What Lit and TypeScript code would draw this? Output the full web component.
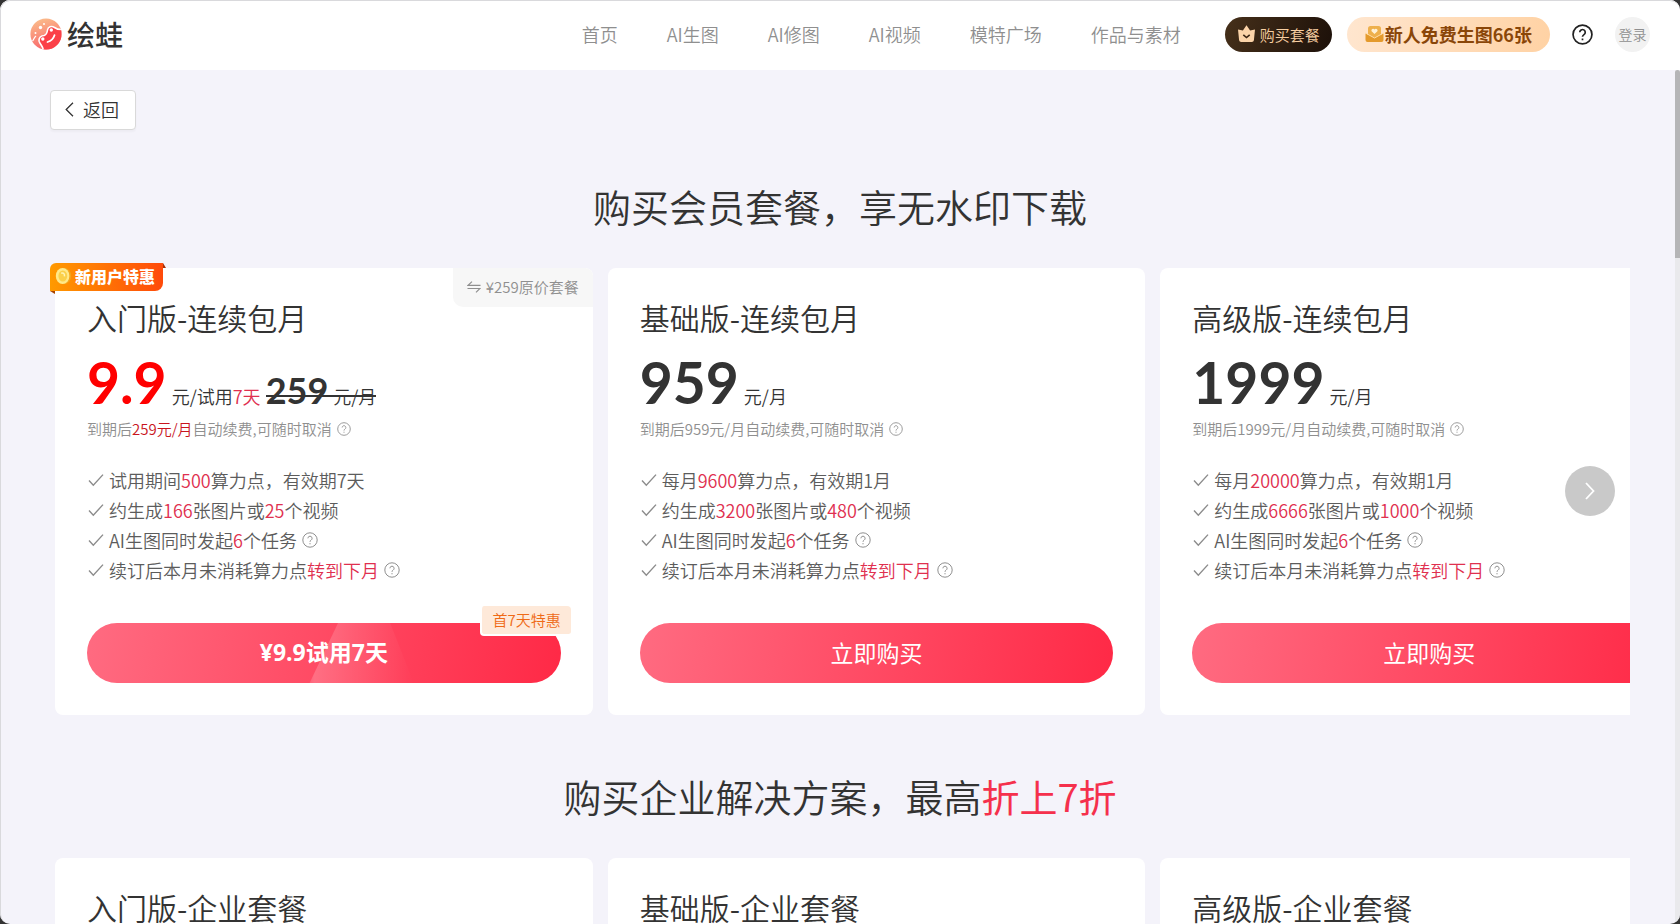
import { LitElement, html, css, nothing, TemplateResult } from "lit";
import { customElement, property } from "lit/decorators.js";

type Part = string | { hot: string };
interface Feature { parts: Part[]; help?: boolean }
interface Plan {
  name: string;
  price: string;
  trial?: boolean;
  renew: Part[];
  features: Feature[];
}

const hot = (text: string): Part => ({ hot: text });
const rich = (parts: Part[]) =>
  parts.map((p) => (typeof p === "string" ? p : html`<span class="hot">${p.hot}</span>`));

const common: Feature[] = [
  { parts: ["AI生图同时发起", hot("6"), "个任务"], help: true },
  { parts: ["续订后本月未消耗算力点", hot("转到下月")], help: true },
];

const memberPlans: Plan[] = [
  {
    name: "入门版-连续包月", price: "9.9", trial: true,
    renew: ["到期后", hot("259元/月"), "自动续费,可随时取消"],
    features: [
      { parts: ["试用期间", hot("500"), "算力点，有效期7天"] },
      { parts: ["约生成", hot("166"), "张图片或", hot("25"), "个视频"] },
      ...common,
    ],
  },
  {
    name: "基础版-连续包月", price: "959",
    renew: ["到期后959元/月自动续费,可随时取消"],
    features: [
      { parts: ["每月", hot("9600"), "算力点，有效期1月"] },
      { parts: ["约生成", hot("3200"), "张图片或", hot("480"), "个视频"] },
      ...common,
    ],
  },
  {
    name: "高级版-连续包月", price: "1999",
    renew: ["到期后1999元/月自动续费,可随时取消"],
    features: [
      { parts: ["每月", hot("20000"), "算力点，有效期1月"] },
      { parts: ["约生成", hot("6666"), "张图片或", hot("1000"), "个视频"] },
      ...common,
    ],
  },
];

const companyPlans = ["入门版-企业套餐", "基础版-企业套餐", "高级版-企业套餐"];

const helpIcon = (size: number, weight = 1) => html`
  <svg class="icon" width=${size} height=${size} viewBox="0 0 16 16" fill="none" stroke="currentColor" stroke-width=${weight}>
    <circle cx="8" cy="8" r="7.2"></circle>
    <path d="M5.9 6.3a2.1 2.1 0 1 1 3.2 1.8c-.7.5-1.1.8-1.1 1.7"></path>
    <path d="M8 11.1v1.2"></path>
  </svg>`;

const checkIcon = html`
  <svg class="icon check" width="16" height="14" viewBox="0 0 16 14" fill="none" stroke="#8c8c8c" stroke-width="1.4">
    <path d="M1 7.6l4.3 4.6L15 1.6"></path>
  </svg>`;

@customElement("plan-card")
class PlanCard extends LitElement {
  @property({ attribute: false }) plan!: Plan;

  static styles = css`
    :host { display: block; position: relative; box-sizing: border-box; padding: 32px; background: #fff; border-radius: 8px; color: #333; }
    .name { margin: 0; font-size: 30px; line-height: 34px; font-weight: 350; }
    .price { display: flex; align-items: baseline; gap: 5px; margin-top: 18px; font-size: 18px; line-height: 24px; white-space: nowrap; }
    .amount { font: 700 57px/60px Lato, sans-serif; }
    .amount.trial { color: #f00; }
    .old { position: relative; display: flex; align-items: baseline; gap: 5px; }
    .old::after { content: ""; position: absolute; left: 0; right: 0; bottom: 11px; height: 2px; background: #333; }
    .was { font: 700 36px/36px Lato, sans-serif; }
    .hot { color: #e0304f; }
    .renew { display: flex; align-items: center; margin: 7px 0 0; font-size: 15px; line-height: 20px; color: #8f8f8f; white-space: nowrap; }
    .renew .hot { color: #c9151e; }
    .renew .icon { margin-left: 5px; }
    .features { margin: 26px 0 38px; padding: 0; list-style: none; font-size: 18px; line-height: 30px; color: #5c5c5c; }
    .feature { display: flex; align-items: center; height: 30px; white-space: nowrap; }
    .feature .icon { color: #8f8f8f; margin-left: 5px; }
    .feature .check { margin: 0 5px 0 1px; }
    .icon { flex: none; }
    .action { position: relative; }
    .buy { display: block; width: 100%; height: 60px; padding: 0 0 2px; border: 0; border-radius: 30px; overflow: hidden; position: relative;
      background: linear-gradient(100deg, #ff6b81, #ff2946); color: #fff; font: 400 23px/58px "Noto Sans CJK SC", sans-serif; cursor: pointer; }
    .buy.trial { font-family: "Open Sans", "Noto Sans CJK SC", sans-serif; font-weight: 700; }
    .shine { position: absolute; inset: 0; clip-path: polygon(53% 0, 64% 0, 69% 100%, 47% 100%);
      background: linear-gradient(90deg, transparent 45%, #ffffff33 48%, #ffffff1a 58%, transparent 69%); }
    .label { position: relative; }
    .promo { position: absolute; right: -10px; top: -17px; padding: 0 10px; border: 2px solid #fff; border-width: 0 0 2px 2px; border-radius: 4px; background: #fee9d9; color: #ef6a16; font-size: 15px; line-height: 28px; }
    .ribbon { position: absolute; left: -5px; top: -5px; display: flex; align-items: center; gap: 3px; box-sizing: border-box; height: 28px; padding: 0 8px 2px 5px;
      border-radius: 6px 0 8px 0; background: linear-gradient(90deg, #ff9a00, #ff4a0a); color: #fff; font-weight: 900; font-size: 16px; line-height: 26px; white-space: nowrap; }
    .ribbon::before { content: ""; position: absolute; left: 0; top: 28px; border-top: 3px solid #a84300; border-left: 5px solid transparent; }
    .ribbon::after { content: ""; position: absolute; right: -3px; top: 0; border-bottom: 5px solid #a83208; border-right: 3px solid transparent; }
    .swap { position: absolute; right: 0; top: 0; display: flex; align-items: center; gap: 5px; height: 39px; padding: 0 14px 2px; border: 0; border-radius: 0 8px 0 10px;
      background: #f7f7f7; color: #8f8f8f; font: inherit; font-size: 15px; cursor: pointer; }
  `;

  render() {
    const p = this.plan;
    return html`
      ${p.trial ? html`
        <div class="ribbon">
          <svg width="17" height="18" viewBox="0 0 17 18">
            <ellipse cx="9.3" cy="9" rx="6.8" ry="8" fill="#f3a51c"></ellipse>
            <ellipse cx="7.6" cy="9" rx="6.8" ry="8" fill="#ffe98a"></ellipse>
            <ellipse cx="7.8" cy="9" rx="4.4" ry="5.6" fill="#fbd04a"></ellipse>
            <path d="M6.2 6.2c2.600-1 3.600 1 3.200 3.200" stroke="#fff3b8" stroke-width="1.500" fill="none"></path>
          </svg>新用户特惠
        </div>
        <button class="swap" type="button">
          <svg width="14" height="12" viewBox="0 0 14 12" fill="none" stroke="currentColor" stroke-width="1.200">
            <path d="M5 .6L1 4.300h12.500M.5 7.500H13L9 11.400"></path>
          </svg>¥259原价套餐
        </button>` : nothing}
      <h3 class="name">${p.name}</h3>
      <div class="price">
        <span class="amount ${p.trial ? "trial" : ""}">${p.price}</span>
        ${p.trial
          ? html`<span>元/试用<span class="hot">7天</span></span><span class="old"><span class="was">259</span><span>元/月</span></span>`
          : html`<span>元/月</span>`}
      </div>
      <p class="renew"><span>${rich(p.renew)}</span>${helpIcon(14)}</p>
      <ul class="features">
        ${p.features.map((f) => html`<li class="feature">${checkIcon}<span>${rich(f.parts)}</span>${f.help ? helpIcon(16) : nothing}</li>`)}
      </ul>
      <div class="action">
        ${p.trial
          ? html`<button class="buy trial" type="button"><span class="shine"></span><span class="label">¥9.9试用7天</span></button><span class="promo">首7天特惠</span>`
          : html`<button class="buy" type="button">立即购买</button>`}
      </div>`;
  }
}

@customElement("app-root")
class AppRoot extends LitElement {
  static styles = css`
    :host { display: block; height: 100vh; overflow: hidden; background: #333; color: #333; font-family: "Noto Sans CJK SC", sans-serif; font-weight: 350; }
    .window { position: relative; display: flex; flex-direction: column; box-sizing: border-box; height: 100%; overflow: hidden; border-radius: 10px; background: #f4f3fa; }
    .window::after { content: ""; position: absolute; inset: 0; border: 1px solid #d9d9dc; border-width: 1px 0 0 1px; border-radius: 10px; pointer-events: none; }
    .header { flex: none; display: flex; align-items: center; height: 70px; padding: 0 30px 2px; background: #fff; box-sizing: border-box; }
    .logo { display: flex; align-items: center; gap: 5px; margin-right: auto; color: #333; text-decoration: none; font-size: 28px; font-weight: 500; line-height: 32px; }
    .nav { display: flex; gap: 49px; margin-right: 44px; }
    .link { color: #8f8f8f; text-decoration: none; font-size: 18px; white-space: nowrap; }
    .pill { display: flex; align-items: center; justify-content: center; height: 35px; padding: 0 12px; border: 0; border-radius: 18px; font: inherit; white-space: nowrap; cursor: pointer; }
    .vip { gap: 4px; background: linear-gradient(110deg, #46301a, #1c1009); color: #f8cfa2; font-size: 15px; }
    .gift { gap: 1px; margin-left: 15px; padding: 0 18px; background: linear-gradient(100deg, #ffe6cf, #ffd2a4); color: #8a4608; font-size: 18px; font-weight: 700; }
    .help { display: flex; margin: 0 22px; padding: 0; border: 0; background: none; color: #222; cursor: pointer; }
    .login { width: 35px; height: 35px; padding: 0; border: 0; border-radius: 50%; background: #f2f2f2; color: #8f8f8f; font: inherit; font-size: 14px; white-space: nowrap; cursor: pointer; }
    .main { flex: 1; min-height: 0; overflow: hidden; padding: 20px 50px 0; }
    .back { display: flex; align-items: center; gap: 9px; height: 40px; padding: 0 16px 2px 14px; border: 1px solid #d9d9d9; border-radius: 4px; background: #fff; box-shadow: 0 2px 2px #00000008; color: #333; font: inherit; font-size: 18px; cursor: pointer; }
    .section { position: relative; padding-top: 50px; }
    .title { margin: 0 0 31px; text-align: center; font-size: 38px; line-height: 52px; font-weight: 350; }
    .accent { color: #f5304c; font-weight: 400; }
    .plans { display: flex; gap: 15px; padding: 5px 0 5px 5px; overflow: hidden; }
    .plan { flex: 0 0 calc((100% + 38px) / 3); }
    .company { box-sizing: border-box; height: 447px; padding: 32px; border-radius: 8px; background: #fff; }
    .name { margin: 0; font-size: 30px; line-height: 34px; font-weight: 350; }
    .next { position: absolute; right: 15px; bottom: 204px; display: grid; place-items: center; width: 50px; height: 50px; padding: 0; border: 0; border-radius: 50%; background: #c9c9c9; cursor: pointer; }
    .track { position: absolute; top: 70px; right: 0; bottom: 0; width: 5px; background: #e9e9ec; }
    .thumb { height: 22%; border-radius: 3px 3px 0 0; background: #b5b5b7; }
  `;

  render(): TemplateResult {
    return html`
      <div class="window">
        <header class="header">
          <a class="logo" href="#">
            <svg width="32" height="32" viewBox="0 0 32 32">
              <defs>
                <linearGradient id="sky" x1="0.200" y1="0" x2="0.500" y2="1"><stop offset="0" stop-color="#fbc08c"></stop><stop offset="1" stop-color="#f8646a"></stop></linearGradient>
                <clipPath id="disc"><circle cx="16" cy="16" r="15.600"></circle></clipPath>
              </defs>
              <g clip-path="url(#disc)">
                <rect width="32" height="32" fill="url(#sky)"></rect>
                <path d="M13.500 33c0-4-3-6-4.300-9.500-1-4 2.300-6 5-6 2.300-.8 3-3 3.300-5.500C18 8.500 21.500 7.500 24.500 9.500c2 1.500 4.500 2.200 8 2V33z" fill="#fb4048" stroke="#fff" stroke-width="1.600"></path>
                <path d="M17.500 24c3.500-1 6-3.500 7-6.800" fill="none" stroke="#fff" stroke-width="1.800" stroke-linecap="round"></path>
                <circle cx="12.800" cy="21" r="1.700" fill="#fff"></circle>
                <circle cx="21.300" cy="12" r="1.700" fill="#fff"></circle>
                <path d="M2.500 23c1.500-1.500 1.500-3.500 3.500-5" stroke="#fff" stroke-width="1.200" fill="none"></path>
                <circle cx="10.500" cy="9.500" r="1.700" fill="#fff"></circle><circle cx="14" cy="6" r="1" fill="#fff"></circle><circle cx="5.500" cy="15" r="1" fill="#fff"></circle>
              </g>
            </svg>
            <span>绘蛙</span>
          </a>
          <nav class="nav">
            ${["首页", "AI生图", "AI修图", "AI视频", "模特广场", "作品与素材"].map((t) => html`<a class="link" href="#">${t}</a>`)}
          </nav>
          <button class="pill vip" type="button">
            <svg width="19" height="18" viewBox="0 0 19 18"><path d="M9.500 .3l3.600 5.200 4.900-1-1.100 10.700q-.3 1.800-2 1.800H4.100q-1.700 0-2-1.800L1 4.500l4.900 1z" fill="#fbd3a8"></path><path d="M6.300 9.800l3.200 2.700 3.200-2.700" fill="none" stroke="#3a2413" stroke-width="1.600"></path></svg>
            <span>购买套餐</span>
          </button>
          <button class="pill gift" type="button">
            <svg width="19" height="18" viewBox="0 0 19 18">
              <rect x="3" y="1" width="13" height="13" rx="2.500" fill="#eeb04c"></rect>
              <path d="M9.500 9L6.600 6.200a1.600 1.600 0 0 1 2.900-1.600 1.600 1.600 0 0 1 2.900 1.600z" fill="#fff1d6"></path>
              <path d="M.5 8.500l9 4.500 9-4.500V15a2 2 0 0 1-2 2h-14a2 2 0 0 1-2-2z" fill="#e49a2c"></path>
              <path d="M.5 8l9 5 9-5" fill="none" stroke="#ffdca6"></path>
            </svg>
            <span>新人免费生图66张</span>
          </button>
          <button class="help" type="button" aria-label="帮助">${helpIcon(21, 1.3)}</button>
          <button class="login" type="button">登录</button>
        </header>
        <main class="main">
          <button class="back" type="button">
            <svg width="9" height="15" viewBox="0 0 9 15" fill="none" stroke="#333" stroke-width="1.300"><path d="M8 .8L1.200 7.500 8 14.200"></path></svg>
            <span>返回</span>
          </button>
          <section class="section">
            <h2 class="title">购买会员套餐，享无水印下载</h2>
            <div class="plans">${memberPlans.map((p) => html`<plan-card class="plan" .plan=${p}></plan-card>`)}</div>
            <button class="next" type="button" aria-label="下一页">
              <svg width="10" height="18" viewBox="0 0 10 18" fill="none" stroke="#fff" stroke-width="1.800"><path d="M1 1l7.500 8L1 17"></path></svg>
            </button>
          </section>
          <section class="section">
            <h2 class="title">购买企业解决方案，最高<span class="accent">折上7折</span></h2>
            <div class="plans">${companyPlans.map((n) => html`<article class="plan company"><h3 class="name">${n}</h3></article>`)}</div>
          </section>
        </main>
        <div class="track"><div class="thumb"></div></div>
      </div>`;
  }
}
